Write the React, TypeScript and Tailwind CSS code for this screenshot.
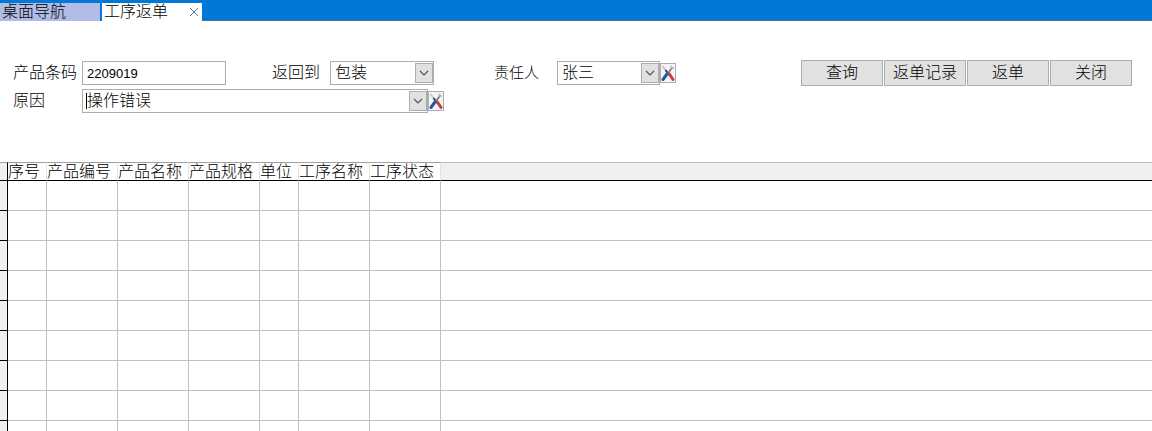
import type { ReactNode } from "react";

const columns = [
  { title: "序号", width: "w-[39px]" },
  { title: "产品编号", width: "w-[71px]" },
  { title: "产品名称", width: "w-[71px]" },
  { title: "产品规格", width: "w-[71px]" },
  { title: "单位", width: "w-[39px]" },
  { title: "工序名称", width: "w-[71px]" },
  { title: "工序状态", width: "w-[71px]" },
];

const rows = Array.from({ length: 9 }, (_, i) => i);

const actions = ["查询", "返单记录", "返单", "关闭"];

type DropdownProps = {
  id: string;
  value: string;
  width: string;
  children?: ReactNode;
};

const Dropdown = ({ id, value, width, children }: DropdownProps) => (
  <div className={`relative h-6 ${width}`}>
    <select
      id={id}
      defaultValue={value}
      className="block h-6 w-full appearance-none border border-[#adadad] bg-white pr-5 pl-1 leading-[22px] outline-none"
    >
      <option>{value}</option>
    </select>
    {children}
    <span className="pointer-events-none absolute top-[2px] right-[1px] flex h-5 w-[18px] items-center justify-center border border-[#adadad] bg-[#e1e1e1]">
      <svg width="10" height="6" viewBox="0 0 10 6" fill="none" stroke="#505050" strokeWidth="1.1">
        <path d="M1 1l4 4 4-4" />
      </svg>
    </span>
  </div>
);

const ToolButton = ({ label }: { label: string }) => (
  <button
    type="button"
    aria-label={label}
    className="flex h-5 w-4 items-center justify-center border border-[#adadad] bg-[#f4f4f4]"
  >
    <svg width="14" height="18" viewBox="0 0 14 18" fill="none" className="shrink-0">
      {/* screwdriver */}
      <path d="M1.5 2L7 9.5" stroke="#c4c8c8" strokeWidth="2" />
      <path d="M4.5 6l3.5 5" stroke="#5a3038" strokeWidth="1.8" />
      <path d="M8 9.5l4 6" stroke="#cf3b35" strokeWidth="3" strokeLinecap="round" />
      {/* wrench */}
      <path d="M11.5 3L6.5 10" stroke="#6f7f88" strokeWidth="1.8" />
      <path d="M10 1.5v2.7h3" stroke="#b8bdb4" strokeWidth="1.2" />
      <path d="M6 10l-4 5.5" stroke="#2457a5" strokeWidth="3" strokeLinecap="round" />
    </svg>
  </button>
);

export default function App() {
  return (
    <div className="flex h-screen flex-col overflow-hidden bg-white font-['Liberation_Sans','Noto_Sans_CJK_SC',sans-serif] text-[16px] font-light text-black">
      {/* Tabs */}
      <nav className="flex h-[21px] shrink-0 items-end gap-[2px] bg-[#0078d7]">
        <button type="button" className="flex h-[18px] w-[100px] items-center bg-[#b1bce6] pl-[2px] leading-4">
          桌面导航
        </button>
        <div className="flex h-[18px] w-[100px] items-center justify-between bg-white pr-1 pl-[2px]">
          <button type="button" className="leading-4">
            工序返单
          </button>
          <button type="button" aria-label="关闭标签">
            <svg width="8" height="8" viewBox="0 0 8 8" stroke="#60789c" strokeWidth="1">
              <path d="M0 0l8 8M8 0L0 8" />
            </svg>
          </button>
        </div>
        <div className="-ml-[2px] h-px flex-1 bg-[#4a7094]" />
      </nav>

      {/* Query form */}
      <form className="flex shrink-0 flex-col gap-[3px] pt-[39px] pr-5 pb-[49px] pl-[13px]">
        <div className="flex h-[26px] items-center">
          <label htmlFor="barcode" className="w-[69px] leading-6">
            产品条码
          </label>
          <input
            id="barcode"
            defaultValue="2209019"
            className="h-6 w-36 border border-[#adadad] bg-white px-1 text-[13px] outline-none"
          />
          <label htmlFor="back" className="ml-[46px] w-[58px] leading-6">
            返回到
          </label>
          <Dropdown id="back" value="包装" width="w-[104px]" />
          <label htmlFor="owner" className="ml-[60px] w-[63px] text-[15px] leading-6">
            责任人
          </label>
          <Dropdown id="owner" value="张三" width="w-[103px]" />
          <ToolButton label="编辑责任人" />
          <div className="ml-auto flex gap-px">
            {actions.map((a) => (
              <button
                key={a}
                type="button"
                className="h-[26px] w-[82px] border border-[#adadad] bg-[#e1e1e1] leading-6"
              >
                {a}
              </button>
            ))}
          </div>
        </div>
        <div className="flex h-6 items-center">
          <label htmlFor="reason" className="w-[69px] leading-6">
            原因
          </label>
          <Dropdown id="reason" value="操作错误" width="w-[346px]">
            <span className="absolute top-1 left-1 h-4 w-px bg-black" />
          </Dropdown>
          <ToolButton label="编辑原因" />
        </div>
      </form>

      {/* Result grid */}
      <table className="w-full table-fixed border-separate border-spacing-0">
        <thead>
          <tr className="h-[19px]">
            <th className="w-2 border-t border-r border-b border-t-[#a0a0a0] border-r-black border-b-black bg-[#f0f0f0] p-0" />
            {columns.map((c) => (
              <th
                key={c.title}
                className={`${c.width} border-t border-r border-b border-t-[#a0a0a0] border-r-[#e4e4e4] border-b-black p-0 text-left leading-[17px] font-light whitespace-nowrap`}
              >
                {c.title}
              </th>
            ))}
            <th className="border-t border-b border-t-[#c0c0c0] border-b-black bg-[#f0f0f0] p-0" />
          </tr>
        </thead>
        <tbody>
          {rows.map((r) => (
            <tr key={r} className="h-[30px]">
              <td className="border-r border-b border-black bg-[#f0f0f0] p-0" />
              {columns.map((c) => (
                <td key={c.title} className="border-r border-b border-[#c0c0c0] p-0" />
              ))}
              <td className="border-b border-[#c0c0c0] p-0" />
            </tr>
          ))}
        </tbody>
      </table>
    </div>
  );
}
